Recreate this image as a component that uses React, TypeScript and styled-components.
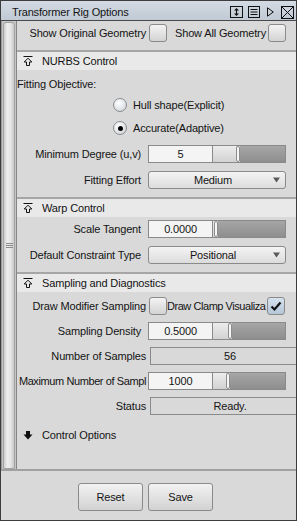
import React from 'react';
import styled, { createGlobalStyle } from 'styled-components';

const GlobalStyle = createGlobalStyle`
  html, body {
    margin: 0;
    padding: 0;
    background: #d9d9d9;
  }

  body {
    font-family: "Liberation Sans", Arial, sans-serif;
    font-size: 11px;
    letter-spacing: -0.15px;
    color: #141414;
  }
`;

const Window = styled.div`
  width: 297px;
  height: 521px;
  box-sizing: border-box;
  border: 1px solid #3c3c3c;
  background: #d9d9d9;
  display: flex;
  flex-direction: column;
  overflow: hidden;
`;

const TitleBar = styled.div`
  height: 20px;
  box-sizing: border-box;
  padding: 3px 2px 0 11px;
  border-bottom: 1px solid #4a4a4a;
  background: linear-gradient(#d3dae3, #c0c9d4);
  display: flex;
  align-items: center;
  flex-shrink: 0;
`;

const Title = styled.span`
  flex: 1;
  white-space: nowrap;
`;

const TitleIcons = styled.div`
  display: flex;
  align-items: center;
`;

const TitleIcon = styled.svg<{ $ml: number }>`
  display: block;
  margin-left: ${({ $ml }) => $ml}px;
`;

const Body = styled.div`
  flex: 1;
  display: flex;
  min-height: 0;
`;

const Strip = styled.div`
  width: 16px;
  box-sizing: border-box;
  border-left: 1px solid #9a9a9a;
  border-right: 1px solid #858585;
  background: #c6c6c6;
  padding: 1px 1px 0 1px;
  display: flex;
  flex-shrink: 0;
`;

const StripThumb = styled.div`
  flex: 1;
  border: 1px solid #a2a2a2;
  border-radius: 3px 3px 1px 1px;
  background: linear-gradient(90deg, #cfcfcf, #eeeeee 35%, #e6e6e6 65%, #c9c9c9);
  display: flex;
  flex-direction: column;
  justify-content: center;
  align-items: center;
  gap: 1px;
`;

const GripLine = styled.div`
  width: 7px;
  height: 1px;
  background: #8a8a8a;
`;

const Content = styled.div`
  flex: 1;
  display: flex;
  flex-direction: column;
  overflow: hidden;
`;

const TopRow = styled.div`
  display: flex;
  align-items: center;
  height: 18px;
  padding: 3px 0 8px;
`;

const Label = styled.div<{ $pr?: number; $tight?: boolean }>`
  width: 129px;
  box-sizing: border-box;
  padding-right: ${({ $pr }) => $pr ?? 0}px;
  flex-shrink: 0;
  text-align: right;
  line-height: 18px;
  white-space: nowrap;
  letter-spacing: ${({ $tight }) => ($tight ? '-0.4px' : 'inherit')};
`;

const InlineText = styled.span<{ $ml: number; $w: number; $tight?: boolean }>`
  margin-left: ${({ $ml }) => $ml}px;
  width: ${({ $w }) => $w}px;
  flex-shrink: 0;
  line-height: 18px;
  white-space: nowrap;
  letter-spacing: ${({ $tight }) => ($tight ? '-0.45px' : 'inherit')};
`;

const CheckBox = styled.div<{ $checked?: boolean; $ml: number }>`
  width: 18px;
  height: 18px;
  box-sizing: border-box;
  margin-left: ${({ $ml }) => $ml}px;
  flex-shrink: 0;
  border: 1px solid #8a8a8a;
  border-radius: 3px;
  background: ${({ $checked }) =>
    $checked
      ? 'linear-gradient(#d6e2ee, #b4c6d8)'
      : 'linear-gradient(#f3f3f3, #d3d3d3)'};
  display: flex;
  align-items: center;
  justify-content: center;
`;

const SectionHeader = styled.div<{ $collapsed?: boolean; $mt?: number }>`
  height: 18px;
  flex-shrink: 0;
  margin-top: ${({ $mt }) => $mt ?? 0}px;
  border-top: ${({ $collapsed }) => ($collapsed ? 'none' : '2px solid #a6a6a6')};
  background: ${({ $collapsed }) => ($collapsed ? 'transparent' : '#e9e9e9')};
  padding-left: 6px;
  display: flex;
  align-items: center;
`;

const HeaderText = styled.span`
  margin-left: 9px;
  white-space: nowrap;
`;

const SectionBody = styled.div<{ $pb: number }>`
  display: flex;
  flex-direction: column;
  padding-bottom: ${({ $pb }) => $pb}px;
`;

const PlainRow = styled.div<{ $mt: number }>`
  margin-top: ${({ $mt }) => $mt}px;
  height: 18px;
  line-height: 18px;
  white-space: nowrap;
`;

const RadioRow = styled.div<{ $mt: number }>`
  margin-top: ${({ $mt }) => $mt}px;
  height: 22px;
  padding-left: 96px;
  display: flex;
  align-items: center;
`;

const RadioDot = styled.div<{ $on?: boolean }>`
  width: 14px;
  height: 14px;
  box-sizing: border-box;
  border-radius: 50%;
  border: 1px solid #8c8c8c;
  background: radial-gradient(circle at 40% 35%, #ffffff, #e4e8ec 50%, #c2c9d0);
  display: flex;
  align-items: center;
  justify-content: center;

  &::after {
    content: '';
    width: 5px;
    height: 5px;
    border-radius: 50%;
    background: #000;
    display: ${({ $on }) => ($on ? 'block' : 'none')};
  }
`;

const RadioText = styled.span`
  margin-left: 6px;
  white-space: nowrap;
`;

const FormRow = styled.div<{ $mt: number }>`
  margin-top: ${({ $mt }) => $mt}px;
  height: 18px;
  display: flex;
  align-items: stretch;
  flex-shrink: 0;
`;

const NumberField = styled.div`
  width: 65px;
  margin-left: 2px;
  box-sizing: border-box;
  border: 1px solid #8a8a8a;
  background: #f4f4f4;
  text-align: center;
  line-height: 16px;
  flex-shrink: 0;
`;

const Slider = styled.div`
  width: 73px;
  box-sizing: border-box;
  border: 1px solid #8a8a8a;
  border-left: none;
  display: flex;
  flex-shrink: 0;
`;

const SliderFill = styled.div<{ $w: number }>`
  width: ${({ $w }) => $w}px;
  background: linear-gradient(#ececec, #d2d2d2);
  flex-shrink: 0;
`;

const SliderThumb = styled.div`
  width: 4px;
  box-sizing: border-box;
  border: 1px solid #8c8c8c;
  border-radius: 2px;
  background: #f6f6f6;
  flex-shrink: 0;
`;

const SliderRest = styled.div`
  flex: 1;
  background: linear-gradient(#a6a6a6, #8e8e8e);
`;

const Dropdown = styled.div`
  width: 138px;
  margin-left: 2px;
  box-sizing: border-box;
  border: 1px solid #8a8a8a;
  border-radius: 3px;
  background: linear-gradient(#f4f4f4, #dcdcdc);
  display: flex;
  align-items: center;
  padding: 0 5px 0 0;
  flex-shrink: 0;
`;

const DropdownText = styled.span`
  flex: 1;
  text-align: center;
  padding-left: 4px;
  white-space: nowrap;
`;

const ReadonlyField = styled.div`
  width: 160px;
  margin-left: 4px;
  box-sizing: border-box;
  border: 1px solid #8a8a8a;
  text-align: center;
  line-height: 16px;
  flex-shrink: 0;
`;

const Footer = styled.div`
  height: 51px;
  box-sizing: border-box;
  border-top: 2px solid #a0a0a0;
  padding: 12px 6px 0 0;
  display: flex;
  justify-content: center;
  align-items: flex-start;
  gap: 5px;
  flex-shrink: 0;
`;

const Button = styled.div`
  width: 65px;
  height: 28px;
  box-sizing: border-box;
  border: 1px solid #8a8a8a;
  border-radius: 3px;
  background: linear-gradient(#f2f2f2, #e2e2e2 50%, #d2d2d2);
  display: flex;
  align-items: center;
  justify-content: center;
`;

const CollapseIcon: React.FC = () => (
  <svg width="10" height="10" viewBox="0 0 10 10">
    <path d="M0.5 0.5H9.5" stroke="#111" />
    <path d="M5 2.2L8.8 6H6.5V9.5H3.5V6H1.2Z" fill="none" stroke="#111" />
  </svg>
);

const ExpandIcon: React.FC = () => (
  <svg width="10" height="9" viewBox="0 0 10 9">
    <path d="M3 0H7V3.5H9.5L5 8.5L0.5 3.5H3Z" fill="#111" />
  </svg>
);

const CheckMark: React.FC = () => (
  <svg width="12" height="11" viewBox="0 0 12 11">
    <path d="M1.5 5.5L4.5 8.5L10.5 1.5" fill="none" stroke="#111" strokeWidth="2.2" />
  </svg>
);

const DropArrow: React.FC = () => (
  <svg width="7" height="6" viewBox="0 0 7 6">
    <path d="M0 0.5H7L3.5 5.5Z" fill="#5a5a5a" />
  </svg>
);

const SliderControl: React.FC<{ value: string; thumb: number }> = ({ value, thumb }) => (
  <>
    <NumberField>{value}</NumberField>
    <Slider>
      <SliderFill $w={thumb} />
      <SliderThumb />
      <SliderRest />
    </Slider>
  </>
);

const Field: React.FC<{ label: string; value: string; thumb: number; mt: number }> = ({
  label,
  value,
  thumb,
  mt,
}) => (
  <FormRow $mt={mt}>
    <Label $pr={5}>{label}</Label>
    <SliderControl value={value} thumb={thumb} />
  </FormRow>
);

const Select: React.FC<{ label: string; value: string; mt: number }> = ({ label, value, mt }) => (
  <FormRow $mt={mt}>
    <Label $pr={5}>{label}</Label>
    <Dropdown>
      <DropdownText>{value}</DropdownText>
      <DropArrow />
    </Dropdown>
  </FormRow>
);

const ReadOnly: React.FC<{ label: string; value: string; mt: number }> = ({ label, value, mt }) => (
  <FormRow $mt={mt}>
    <Label>{label}</Label>
    <ReadonlyField>{value}</ReadonlyField>
  </FormRow>
);

const App: React.FC = () => {
  return (
    <>
      <GlobalStyle />
      <Window>
        <TitleBar>
          <Title>Transformer Rig Options</Title>
          <TitleIcons>
            <TitleIcon $ml={0} width="13" height="12" viewBox="0 0 13 12">
              <rect x="0.5" y="0.5" width="12" height="11" fill="none" stroke="#111" />
              <path d="M6.5 3V9" stroke="#111" strokeWidth="1.2" />
              <path d="M4 4.5L6.5 2L9 4.5Z M4 7.5L6.5 10L9 7.5Z" fill="#111" />
            </TitleIcon>
            <TitleIcon $ml={5} width="12" height="12" viewBox="0 0 12 12">
              <rect x="0.5" y="0.5" width="11" height="11" fill="none" stroke="#111" />
              <path d="M2.5 3.5H9.5 M2.5 6H9.5 M2.5 8.5H9.5" stroke="#111" />
            </TitleIcon>
            <TitleIcon $ml={7} width="7" height="10" viewBox="0 0 7 10">
              <path d="M0.5 0.8L6.3 5L0.5 9.2Z" fill="none" stroke="#111" />
            </TitleIcon>
            <TitleIcon $ml={7} width="13" height="13" viewBox="0 0 13 13">
              <rect x="0.5" y="0.5" width="12" height="12" fill="none" stroke="#111" />
              <path d="M0.5 0.5L12.5 12.5 M12.5 0.5L0.5 12.5" stroke="#111" />
            </TitleIcon>
          </TitleIcons>
        </TitleBar>

        <Body>
          <Strip>
            <StripThumb>
              <GripLine />
              <GripLine />
              <GripLine />
            </StripThumb>
          </Strip>

          <Content>
            <TopRow>
              <Label>Show Original Geometry</Label>
              <CheckBox $ml={3} />
              <InlineText $ml={8} $w={93}>Show All Geometry</InlineText>
              <CheckBox $ml={0} />
            </TopRow>

            <SectionHeader>
              <CollapseIcon />
              <HeaderText>NURBS Control</HeaderText>
            </SectionHeader>
            <SectionBody $pb={8}>
              <PlainRow $mt={5}>Fitting Objective:</PlainRow>
              <RadioRow $mt={1}>
                <RadioDot />
                <RadioText>Hull shape(Explicit)</RadioText>
              </RadioRow>
              <RadioRow $mt={1}>
                <RadioDot $on />
                <RadioText>Accurate(Adaptive)</RadioText>
              </RadioRow>
              <Field label="Minimum Degree (u,v)" value="5" thumb={23} mt={6} />
              <Select label="Fitting Effort" value="Medium" mt={8} />
            </SectionBody>

            <SectionHeader>
              <CollapseIcon />
              <HeaderText>Warp Control</HeaderText>
            </SectionHeader>
            <SectionBody $pb={8}>
              <Field label="Scale Tangent" value="0.0000" thumb={1} mt={3} />
              <Select label="Default Constraint Type" value="Positional" mt={8} />
            </SectionBody>

            <SectionHeader>
              <CollapseIcon />
              <HeaderText>Sampling and Diagnostics</HeaderText>
            </SectionHeader>
            <SectionBody $pb={0}>
              <FormRow $mt={5}>
                <Label>Draw Modifier Sampling</Label>
                <CheckBox $ml={3} />
                <InlineText $ml={0} $w={100} $tight>Draw Clamp Visualiza</InlineText>
                <CheckBox $ml={0} $checked>
                  <CheckMark />
                </CheckBox>
              </FormRow>
              <Field label="Sampling Density" value="0.5000" thumb={15} mt={7} />
              <ReadOnly label="Number of Samples" value="56" mt={7} />
              <FormRow $mt={7}>
                <Label $tight>Maximum Number of Sampl</Label>
                <SliderControl value="1000" thumb={13} />
              </FormRow>
              <ReadOnly label="Status" value="Ready." mt={7} />
            </SectionBody>

            <SectionHeader $collapsed $mt={11}>
              <ExpandIcon />
              <HeaderText>Control Options</HeaderText>
            </SectionHeader>
          </Content>
        </Body>

        <Footer>
          <Button>Reset</Button>
          <Button>Save</Button>
        </Footer>
      </Window>
    </>
  );
};

export default App;
